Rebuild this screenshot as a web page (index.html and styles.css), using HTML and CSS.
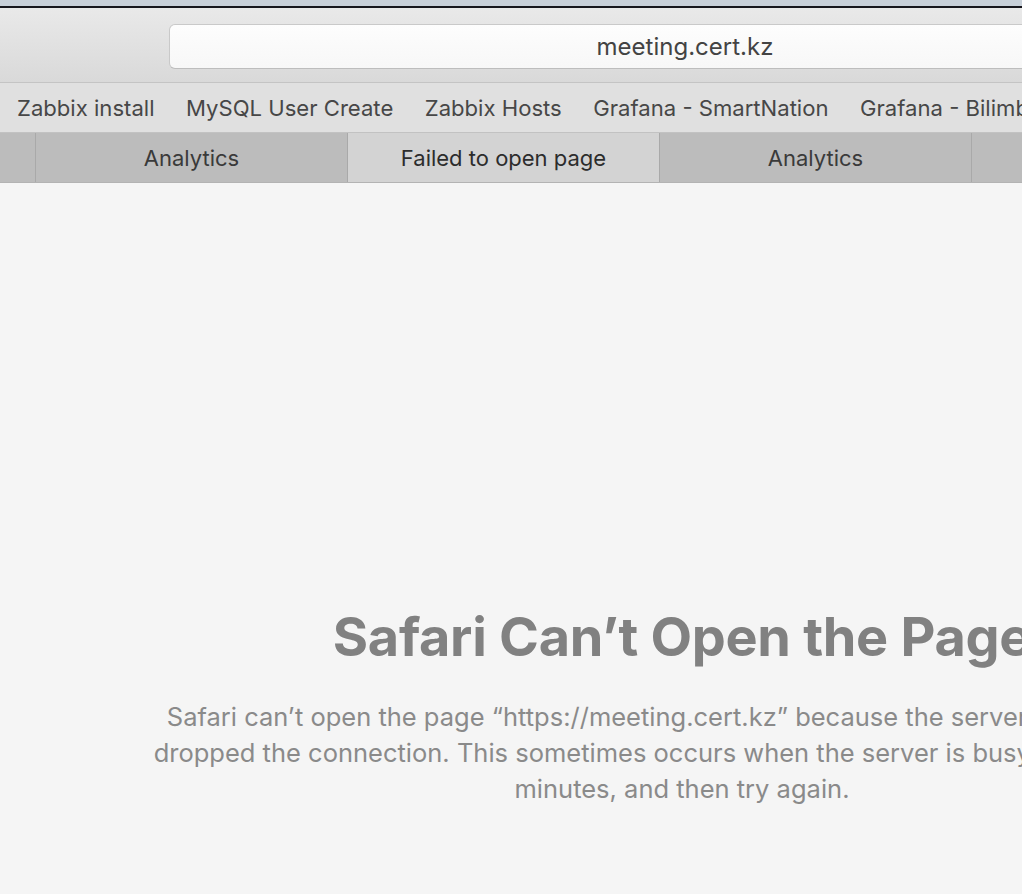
FILE: index.html
```html
<!DOCTYPE html>
<html lang="en">
<head>
<meta charset="utf-8">
<title>Failed to open page</title>
<link rel="stylesheet" href="styles.css">
</head>
<body>
<div class="window">
  <div class="desktop"></div>
  <div class="frame-edge"></div>
  <header class="toolbar">
    <div class="url-field"><span class="url-text">meeting.cert.kz</span></div>
  </header>
  <nav class="bookmarks">
    <span class="bm">Zabbix install</span>
    <span class="bm">MySQL User Create</span>
    <span class="bm">Zabbix Hosts</span>
    <span class="bm">Grafana - SmartNation</span>
    <span class="bm">Grafana - Bilimbase</span>
  </nav>
  <div class="tabs">
    <div class="tab tab-stub"></div>
    <div class="tab">Analytics</div>
    <div class="tab active">Failed to open page</div>
    <div class="tab">Analytics</div>
    <div class="tab">Analytics</div>
  </div>
  <main class="content">
    <h1 class="title">Safari Can’t Open the Page</h1>
    <p class="message">Safari can’t open the page “https://meeting.cert.kz” because the server unexpectedly<br>dropped the connection. This sometimes occurs when the server is busy. Wait for a few<br>minutes, and then try again.</p>
  </main>
</div>
</body>
</html>
```
FILE: styles.css
```css
html, body {
  margin: 0;
  padding: 0;
  overflow: hidden;
  height: 100%;
  background: #f5f5f5;
}
body {
  font-family: Inter, "Noto Sans", sans-serif;
}
.window {
  width: 1364px;
  height: 894px;
  display: flex;
  flex-direction: column;
}
.desktop {
  height: 6px;
  background: #c8d0d9;
}
.frame-edge {
  height: 2px;
  background: #17171d;
}
.toolbar {
  height: 75px;
  box-sizing: border-box;
  padding: 16px 169px 0 169px;
  background: linear-gradient(#e9e9e9, #d9d9d9);
  border-bottom: 1px solid #c4c4c4;
}
.url-field {
  height: 45px;
  box-sizing: border-box;
  border: 1px solid #c9c9c9;
  border-bottom-color: #bdbdbd;
  border-radius: 6px;
  background: linear-gradient(#fdfdfd, #f7f7f7);
  display: flex;
  align-items: center;
  justify-content: center;
}
.url-text {
  font-size: 24px;
  color: #434343;
  padding-left: 6px;
}
.bookmarks {
  height: 50px;
  box-sizing: border-box;
  background: #e0e0e0;
  border-bottom: 1px solid #c2c2c2;
  display: flex;
  align-items: center;
  gap: 31.5px;
  padding: 0 0 0 17px;
  white-space: nowrap;
}
.bm {
  font-size: 22.1px;
  color: #474747;
}
.tabs {
  height: 50px;
  box-sizing: border-box;
  display: flex;
  background: #bdbdbd;
  border-bottom: 1px solid #b3b3b3;
}
.tab {
  flex: 0 0 312px;
  box-sizing: border-box;
  display: flex;
  align-items: center;
  justify-content: center;
  font-size: 22px;
  color: #3a3a3a;
  border-right: 1px solid #a9a9a9;
  background: #bcbcbc;
}
.tab-stub {
  flex: 0 0 36px;
}
.tab.active {
  background: #d3d3d3;
  color: #2c2c2c;
}
.content {
  flex: 1;
  background: #f5f5f5;
  display: flex;
  flex-direction: column;
  align-items: center;
  padding-top: 422px;
}
.title {
  margin: 0;
  font-size: 54px;
  font-weight: 700;
  line-height: 64px;
  color: #818181;
  letter-spacing: -0.3px;
  white-space: nowrap;
}
.message {
  margin: 30px 0 0 0;
  text-align: center;
  font-size: 25.5px;
  line-height: 36px;
  color: #8a8a8a;
  white-space: nowrap;
}
```
